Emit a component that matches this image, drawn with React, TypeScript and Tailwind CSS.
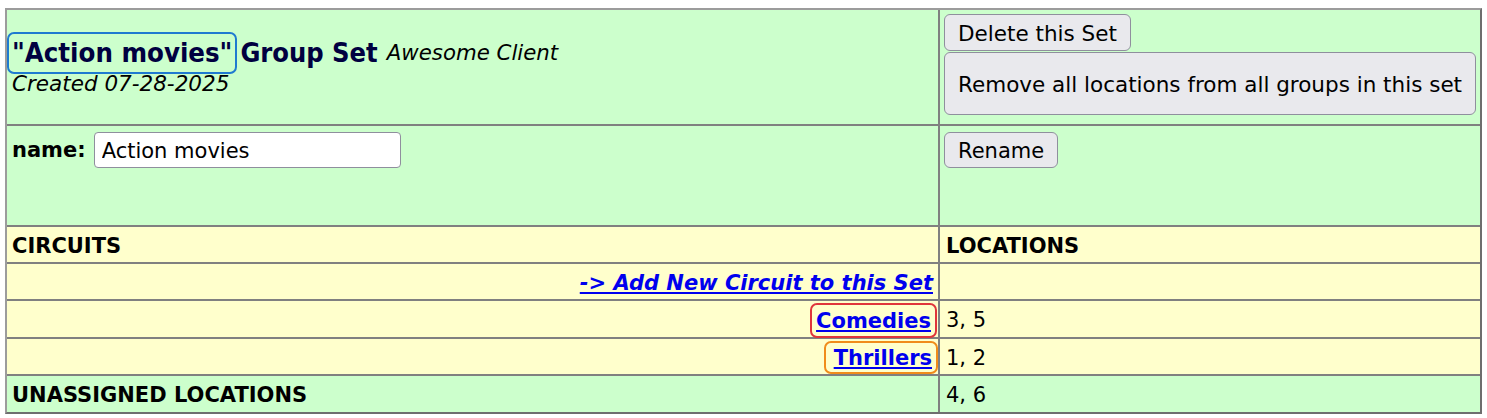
import React from 'react';

const line = 'border-[#808080]';

const Btn: React.FC<{ className?: string; children: React.ReactNode }> = ({ className = '', children }) => (
    <button
        className={`bg-[#e9e9ed] border border-[#8f8f9d] rounded-[6px] text-black leading-none ${className}`}
    >
        {children}
    </button>
);

const App: React.FC = () => {
    return (
        <div className="pt-[8px] pl-[5px] font-['DejaVu_Sans',sans-serif] text-[21px] text-black bg-white min-h-[418px]">
            <div className="w-[1477px] border-2 border-t-[#9c9c9c] border-l-[#9c9c9c] border-r-[#6e6e6e] border-b-[#6e6e6e] grid grid-cols-[933px_540px] grid-rows-[116px_101px_37px_37px_38px_37px_36px]">
                {/* header */}
                <div className={`bg-[#ccffcc] border-r-2 border-b-2 ${line} flex flex-col justify-center pb-[8px]`}>
                    <div className="flex items-center leading-[40px]">
                        <span className="border-2 border-[#1f7ad0] rounded-[7px] px-[3px] leading-[38px] font-['DejaVu_Sans_Condensed','DejaVu_Sans',sans-serif] [font-stretch:condensed] font-bold text-[27.3px] text-[#000040]">
                            "Action movies"
                        </span>
                        <span className="ml-[3px] font-['DejaVu_Sans_Condensed','DejaVu_Sans',sans-serif] [font-stretch:condensed] font-bold text-[27px] text-[#000040]">
                            Group Set
                        </span>
                        <span className="ml-[9px] italic text-[21.3px]">Awesome Client</span>
                    </div>
                    <div className="italic pl-[5px] leading-[20px] text-[21.5px]">Created 07-28-2025</div>
                </div>
                <div className={`bg-[#ccffcc] border-b-2 ${line} pl-[4px] pt-[4px] flex flex-col items-start gap-px`}>
                    <Btn className="h-[37px] px-[13px] text-[21.5px] pt-[2px]">Delete this Set</Btn>
                    <Btn className="h-[63px] px-[13px] text-[21.5px] pt-[2px]">Remove all locations from all groups in this set</Btn>
                </div>

                {/* name */}
                <div className={`bg-[#ccffcc] border-r-2 border-b-2 ${line} pl-[5px] pt-[6px]`}>
                    <div className="flex items-center gap-[8px]">
                        <span className="font-bold pt-[2px]">name:</span>
                        <input
                            defaultValue="Action movies"
                            className="w-[307px] h-[36px] bg-white border border-[#8f8f9d] rounded-[4px] px-[7px] pt-[2px] text-[21px] font-['DejaVu_Sans',sans-serif] outline-none"
                        />
                    </div>
                </div>
                <div className={`bg-[#ccffcc] border-b-2 ${line} pl-[4px] pt-[6px]`}>
                    <Btn className="h-[36px] px-[13px] text-[21px] pt-[2px]">Rename</Btn>
                </div>

                {/* column heads */}
                <div className={`bg-[#ffffcc] border-r-2 border-b-2 ${line} pl-[5px] pt-[4px] flex items-center font-bold`}>CIRCUITS</div>
                <div className={`bg-[#ffffcc] border-b-2 ${line} pl-[6px] pt-[4px] flex items-center font-bold`}>LOCATIONS</div>

                {/* add new */}
                <div className={`bg-[#ffffcc] border-r-2 border-b-2 ${line} pr-[5px] pt-[4px] flex items-center justify-end`}>
                    <a href="#" className="font-bold italic text-[#0000ee] underline">-&gt; Add New Circuit to this Set</a>
                </div>
                <div className={`bg-[#ffffcc] border-b-2 ${line}`} />

                {/* comedies */}
                <div className={`bg-[#ffffcc] border-r-2 border-b-2 ${line} pr-[1px] pt-[2px] flex items-center justify-end`}>
                    <a href="#" className="border-2 border-[#e0353b] rounded-[7px] px-[4px] pt-[2px] leading-[29px] font-bold text-[#0000ee] underline">Comedies</a>
                </div>
                <div className={`bg-[#ffffcc] border-b-2 ${line} pl-[6px] pt-[4px] flex items-center`}>3, 5</div>

                {/* thrillers */}
                <div className={`bg-[#ffffcc] border-r-2 border-b-2 ${line} pt-[2px] flex items-center justify-end`}>
                    <a href="#" className="border-2 border-[#f08c1a] rounded-[7px] pl-[8px] pr-[4px] pt-[2px] leading-[27px] font-bold text-[#0000ee] underline">Thrillers</a>
                </div>
                <div className={`bg-[#ffffcc] border-b-2 ${line} pl-[6px] pt-[4px] flex items-center`}>1, 2</div>

                {/* unassigned */}
                <div className={`bg-[#ccffcc] border-r-2 ${line} pl-[5px] pt-[4px] flex items-center font-bold`}>UNASSIGNED LOCATIONS</div>
                <div className="bg-[#ccffcc] pl-[6px] pt-[4px] flex items-center">4, 6</div>
            </div>
        </div>
    );
};

export default App;
